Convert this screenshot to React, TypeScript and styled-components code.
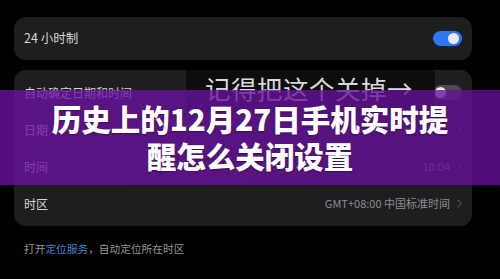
import React from 'react'
import styled, { createGlobalStyle } from 'styled-components'

const GlobalStyle = createGlobalStyle`
  html, body {
    margin: 0;
    padding: 0;
    background: #000;
  }
  body {
    font-family: "Noto Sans CJK SC", "Noto Sans", "Liberation Sans", sans-serif;
  }
`

const Screen = styled.div`
  position: relative;
  width: 500px;
  height: 279px;
  overflow: hidden;
  background: #000;
  padding: 17px 28px 0 14px;
  box-sizing: border-box;
  display: flex;
  flex-direction: column;
  gap: 10px;
`

const Card = styled.div<{ $pad?: number }>`
  position: relative;
  background: #1d1e20;
  border-radius: 12px;
  padding: ${(p) => p.$pad ?? 0}px 0;
  display: flex;
  flex-direction: column;
  overflow: hidden;
`

const Row = styled.div<{ $h: number }>`
  height: ${(p) => p.$h}px;
  display: flex;
  align-items: center;
  justify-content: space-between;
  padding: 0 10px;
`

const Label = styled.span<{ $size?: number }>`
  font-size: ${(p) => p.$size ?? 12}px;
  color: #d6d6d8;
  line-height: 1;
`

const Value = styled.span`
  display: flex;
  align-items: center;
  gap: 7px;
  font-size: 11px;
  color: #8d8d90;
  line-height: 1;
`

const Toggle = styled.div<{ $on: boolean }>`
  position: relative;
  width: 29px;
  height: 15px;
  border-radius: 8px;
  background: ${(p) => (p.$on ? '#2a78f4' : '#4b4c50')};

  &:before {
    content: '';
    position: absolute;
    top: 2px;
    left: ${(p) => (p.$on ? '15px' : '2px')};
    width: 11px;
    height: 11px;
    border-radius: 50%;
    background: #e9ebf0;
  }
`

const Chevron = () => (
  <svg width="5" height="9" viewBox="0 0 5 9" fill="none">
    <path d="M0.6 0.6 L4.2 4.5 L0.6 8.4" stroke="#6a6a6d" strokeWidth="1" />
  </svg>
)

const Note = styled.div`
  margin-top: 5px;
  padding-left: 10px;
  font-size: 10.7px;
  color: #9a9a9d;
`

const Link = styled.span`
  color: #4c82dc;
`

const Annotation = styled.div`
  position: absolute;
  top: 0;
  left: 172px;
  width: 249px;
  height: 42px;
  background: #0d0d0e;
  display: flex;
  align-items: flex-start;
  padding: 3px 0 0 19px;
  box-sizing: border-box;
  font-size: 25.5px;
  line-height: 30px;
  color: #d9d9dc;
  letter-spacing: 0.5px;
  white-space: nowrap;
`

const Banner = styled.div`
  position: absolute;
  top: 90px;
  left: 0;
  width: 500px;
  height: 95px;
  background: linear-gradient(90deg, rgba(108, 18, 162, 0.78), rgba(100, 16, 152, 0.78));
  display: flex;
  flex-direction: column;
  align-items: center;
  justify-content: center;
  padding-bottom: 2px;
  box-sizing: border-box;
`

const TitleLine = styled.div`
  font-family: "Noto Sans CJK SC", sans-serif;
  font-weight: 900;
  font-size: 29.5px;
  line-height: 37px;
  color: #fff;
  white-space: nowrap;
  text-shadow: 0 1px 2px rgba(0, 0, 0, 0.35);
`

export default function App() {
  return (
    <>
      <GlobalStyle />
      <Screen>
        <Card>
          <Row $h={43}>
            <Label $size={12.5}>24 小时制</Label>
            <Toggle $on />
          </Row>
        </Card>

        <Card $pad={4}>
          <Row $h={37}>
            <Label>自动确定日期和时间</Label>
            <Toggle $on={false} />
          </Row>
          <Row $h={37}>
            <Label>日期</Label>
            <Value>
              <Chevron />
            </Value>
          </Row>
          <Row $h={37}>
            <Label>时间</Label>
            <Value>
              10:04
              <Chevron />
            </Value>
          </Row>
          <Row $h={37}>
            <Label>时区</Label>
            <Value>
              GMT+08:00 中国标准时间
              <Chevron />
            </Value>
          </Row>
          <Annotation>记得把这个关掉→</Annotation>
        </Card>

        <Note>
          打开<Link>定位服务</Link>，自动定位所在时区
        </Note>

        <Banner>
          <TitleLine>历史上的12月27日手机实时提</TitleLine>
          <TitleLine>醒怎么关闭设置</TitleLine>
        </Banner>
      </Screen>
    </>
  )
}
